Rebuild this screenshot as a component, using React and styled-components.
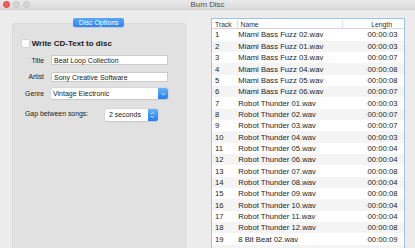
import React from "react";
import styled, { createGlobalStyle } from "styled-components";

const TRACKS = [
  ["1", "Miami Bass Fuzz 02.wav", "00:00:03"],
  ["2", "Miami Bass Fuzz 01.wav", "00:00:03"],
  ["3", "Miami Bass Fuzz 03.wav", "00:00:07"],
  ["4", "Miami Bass Fuzz 04.wav", "00:00:08"],
  ["5", "Miami Bass Fuzz 05.wav", "00:00:08"],
  ["6", "Miami Bass Fuzz 06.wav", "00:00:07"],
  ["7", "Robot Thunder 01.wav", "00:00:03"],
  ["8", "Robot Thunder 02.wav", "00:00:07"],
  ["9", "Robot Thunder 03.wav", "00:00:07"],
  ["10", "Robot Thunder 04.wav", "00:00:03"],
  ["11", "Robot Thunder 05.wav", "00:00:04"],
  ["12", "Robot Thunder 06.wav", "00:00:04"],
  ["13", "Robot Thunder 07.wav", "00:00:08"],
  ["14", "Robot Thunder 08.wav", "00:00:04"],
  ["15", "Robot Thunder 09.wav", "00:00:08"],
  ["16", "Robot Thunder 10.wav", "00:00:04"],
  ["17", "Robot Thunder 11.wav", "00:00:04"],
  ["18", "Robot Thunder 12.wav", "00:00:08"],
  ["19", "8 Bit Beat 02.wav", "00:00:09"],
  ["20", "8 Bit Beat 01.wav", "00:00:11"],
];

const GlobalStyle = createGlobalStyle`
  html, body {
    margin: 0;
    padding: 0;
    background: #ececec;
  }
  body {
    font-family: "Liberation Sans", Arial, sans-serif;
    color: #222;
  }
`;

const Window = styled.div`
  width: 415px;
  height: 248px;
  overflow: hidden;
  background: #ececec;
  display: flex;
  flex-direction: column;
`;

const TitleBar = styled.div`
  height: 10px;
  flex: none;
  box-sizing: border-box;
  display: grid;
  grid-template-columns: 1fr auto 1fr;
  align-items: center;
  padding: 0 2.5px;
  background: linear-gradient(#e9e9e9, #dcdcdc);
  border-bottom: 1px solid #d0d0d0;
`;

const Lights = styled.div`
  display: flex;
  gap: 3px;
`;

const Light = styled.span`
  width: 7px;
  height: 7px;
  border-radius: 50%;
  background: ${(p) => p.$color};
  border: 0.5px solid ${(p) => p.$edge};
  box-sizing: border-box;
`;

const Title = styled.div`
  font-size: 7.8px;
  color: #4a4a4a;
`;

const Body = styled.div`
  flex: 1;
  display: flex;
  padding: 8px 10px 0 11.7px;
  gap: 25.3px;
  min-height: 0;
`;

const LeftColumn = styled.div`
  width: 174px;
  flex: none;
  display: flex;
  flex-direction: column;
`;

const TabButton = styled.div`
  align-self: center;
  position: relative;
  z-index: 1;
  width: 51px;
  height: 9px;
  border-radius: 2px;
  background: linear-gradient(#5aa6fb, #2a86f8);
  color: #fff;
  font-size: 7px;
  line-height: 9px;
  text-align: center;
  box-shadow: 0 0.5px 0.5px rgba(0, 0, 0, 0.2);
`;

const Panel = styled.div`
  flex: 1;
  margin-top: -4.3px;
  background: #e1e1e1;
  border: 1px solid #d9d9d9;
  border-bottom: none;
  border-radius: 3px 3px 0 0;
  padding: 16.3px 0 0 9px;
`;

const CheckRow = styled.label`
  display: flex;
  align-items: center;
  gap: 3px;
  height: 7px;
  font-size: 8px;
  font-weight: bold;
  color: #1c1c1c;
`;

const CheckBox = styled.span`
  width: 7px;
  height: 7px;
  background: #fff;
  border-radius: 1px;
  box-shadow: 0 0 0 0.5px #c4c4c4;
`;

const FieldGrid = styled.div`
  display: grid;
  grid-template-columns: 21.3px 117px;
  column-gap: 7px;
  row-gap: 6.5px;
  align-items: center;
  margin: 8.3px 0 0 1px;
`;

const FieldLabel = styled.div`
  font-size: 6.8px;
  color: #222;
  text-align: right;
  white-space: nowrap;
`;

const TextBox = styled.div`
  height: 10px;
  box-sizing: border-box;
  background: #fff;
  border: 0.5px solid #cbcbcb;
  font-size: 7px;
  line-height: 9px;
  padding-left: 2px;
  color: #222;
`;

const Popup = styled.div`
  width: ${(p) => p.$width}px;
  height: ${(p) => p.$height}px;
  box-sizing: border-box;
  display: flex;
  background: #fff;
  border-radius: 2px;
  box-shadow: 0 0 0 0.5px #cfcfcf, 0 0.5px 1px rgba(0, 0, 0, 0.15);
  overflow: hidden;
`;

const PopupText = styled.div`
  flex: 1;
  font-size: 7px;
  line-height: ${(p) => p.$height}px;
  padding-left: ${(p) => p.$pad}px;
  color: #222;
  white-space: nowrap;
`;

const PopupCap = styled.div`
  width: 9.5px;
  flex: none;
  display: flex;
  align-items: center;
  justify-content: center;
  background: linear-gradient(#6ab2fb, #1d7ef7);
`;

const GapRow = styled.div`
  display: flex;
  align-items: center;
  margin: 10px 0 0 3.3px;
`;

const GapLabel = styled.div`
  width: 80px;
  font-size: 6.9px;
  color: #222;
  margin-top: -3px;
`;

const TableBox = styled.div`
  flex: 1;
  margin-top: 0.3px;
  background: #fff;
  border: 1px solid #9fc3ef;
  border-bottom: none;
  display: flex;
  flex-direction: column;
  overflow: hidden;
`;

const HeaderRow = styled.div`
  display: grid;
  grid-template-columns: 25px 105px 1fr;
  height: 10px;
  box-sizing: border-box;
  border-bottom: 0.5px solid #d6d6d6;
  flex: none;
`;

const HeaderCell = styled.div`
  font-size: 6.8px;
  line-height: 9.5px;
  color: #333;
  padding-left: ${(p) => p.$pad || 0}px;
  padding-right: ${(p) => (p.$right ? 12 : 0)}px;
  text-align: ${(p) => (p.$right ? "right" : "left")};
  border-left: ${(p) => (p.$sep ? "0.5px solid #dedede" : "none")};
  margin: 1px 0;
`;

const Row = styled.div`
  display: grid;
  grid-template-columns: 25px 105px 1fr;
  height: 11.35px;
  flex: none;
  align-items: center;
  background: ${(p) => (p.$odd ? "#fff" : "#f4f4f4")};
  font-size: 7.7px;
  color: #1e1e1e;
`;

const Cell = styled.div`
  padding-left: ${(p) => p.$pad || 0}px;
  padding-right: ${(p) => (p.$right ? 6.5 : 0)}px;
  text-align: ${(p) => (p.$right ? "right" : "left")};
  white-space: nowrap;
`;

const Chevron = () => (
  <svg width="5" height="4" viewBox="0 0 5 4">
    <path d="M0.8 1.2 L2.5 2.8 L4.2 1.2" fill="none" stroke="#fff" strokeWidth="0.9" />
  </svg>
);

const Stepper = () => (
  <svg width="5" height="8" viewBox="0 0 5 8">
    <path d="M1 3 L2.5 1.5 L4 3 M1 5 L2.5 6.5 L4 5" fill="none" stroke="#fff" strokeWidth="0.8" />
  </svg>
);

const App = () => {
  return (
    <Window>
      <GlobalStyle />
      <TitleBar>
        <Lights>
          <Light $color="#fc5f57" $edge="#e0443e" />
          <Light $color="#d6d6d6" $edge="#c4c4c4" />
          <Light $color="#d6d6d6" $edge="#c4c4c4" />
        </Lights>
        <Title>Burn Disc</Title>
        <div />
      </TitleBar>
      <Body>
        <LeftColumn>
          <TabButton>Disc Options</TabButton>
          <Panel>
            <CheckRow>
              <CheckBox />
              Write CD-Text to disc
            </CheckRow>
            <FieldGrid>
              <FieldLabel>Title</FieldLabel>
              <TextBox>Beat Loop Collection</TextBox>
              <FieldLabel>Artist</FieldLabel>
              <TextBox>Sony Creative Software</TextBox>
              <FieldLabel>Genre</FieldLabel>
              <Popup $width={117} $height={11}>
                <PopupText $height={11} $pad={2}>
                  Vintage Electronic
                </PopupText>
                <PopupCap>
                  <Chevron />
                </PopupCap>
              </Popup>
            </FieldGrid>
            <GapRow>
              <GapLabel>Gap between songs:</GapLabel>
              <Popup $width={52.7} $height={11.7}>
                <PopupText $height={11.7} $pad={4}>
                  2 seconds
                </PopupText>
                <PopupCap>
                  <Stepper />
                </PopupCap>
              </Popup>
            </GapRow>
          </Panel>
        </LeftColumn>
        <TableBox>
          <HeaderRow>
            <HeaderCell $pad={3}>Track</HeaderCell>
            <HeaderCell $pad={2.5} $sep>
              Name
            </HeaderCell>
            <HeaderCell $sep $right>
              Length
            </HeaderCell>
          </HeaderRow>
          {TRACKS.map(([num, name, len], i) => (
            <Row key={num} $odd={i % 2 === 0}>
              <Cell $pad={3}>{num}</Cell>
              <Cell $pad={1.3}>{name}</Cell>
              <Cell $right>{len}</Cell>
            </Row>
          ))}
        </TableBox>
      </Body>
    </Window>
  );
};

export default App;
